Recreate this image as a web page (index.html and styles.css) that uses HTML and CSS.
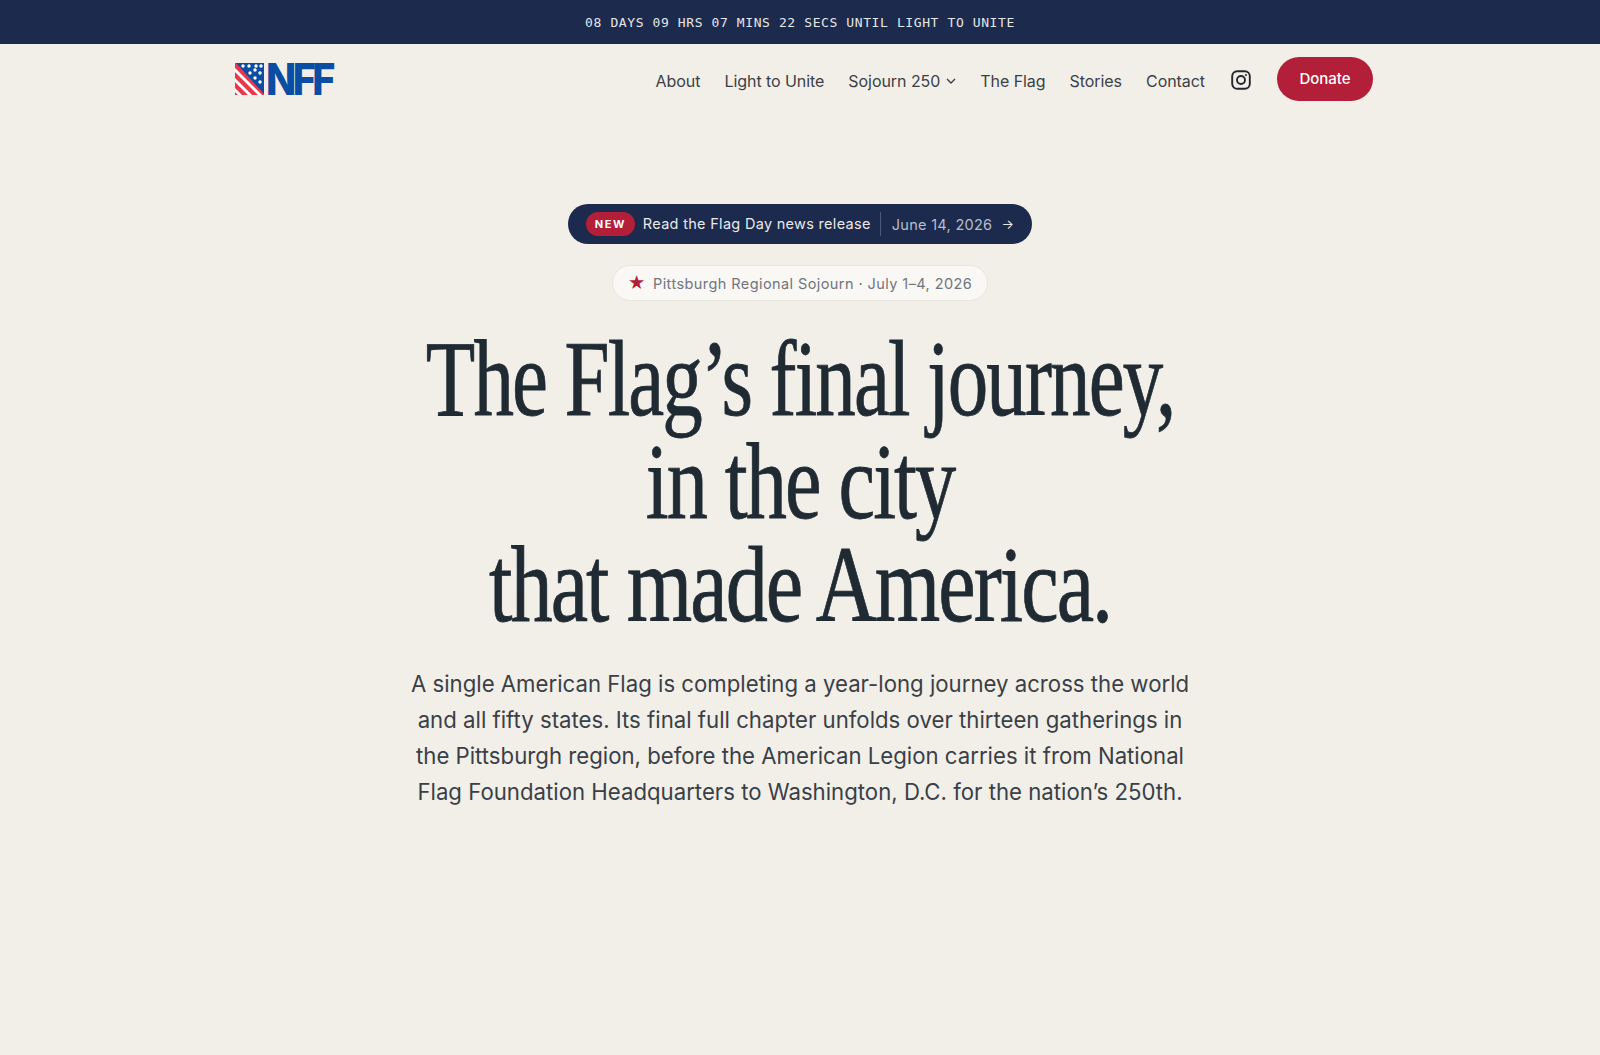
FILE: index.html
```html
<!DOCTYPE html>
<html lang="en">
<head>
    <meta charset="UTF-8">
    <meta name="viewport" content="width=device-width, initial-scale=1.0">
    <title>National Flag Foundation</title>
    <link rel="stylesheet" href="styles.css">
</head>
<body>
    <div class="countdown">08 DAYS 09 HRS 07 MINS 22 SECS UNTIL LIGHT TO UNITE</div>

    <header class="site-header">
        <a class="logo" href="#">
            <svg class="logo-flag" width="29" height="32" viewBox="0 0 29 32">
                <rect width="29" height="32" fill="#e8394a"/>
                <path d="M0 5 L27 32 H23 L0 9 Z M0 15 L17 32 H13 L0 19 Z M0 25 L7 32 H3 L0 29 Z" fill="#fff"/>
                <path d="M1 0 H29 V31 Z" fill="#0b4da2"/>
                <g fill="#fff">
                    <circle cx="8" cy="3" r="1.7"/>
                    <circle cx="14" cy="3" r="1.7"/>
                    <circle cx="21" cy="3" r="1.7"/>
                    <circle cx="26" cy="3" r="1.7"/>
                    <circle cx="15" cy="10" r="1.7"/>
                    <circle cx="20" cy="7" r="1.7"/>
                    <circle cx="25" cy="10" r="1.7"/>
                    <circle cx="20" cy="15" r="1.7"/>
                    <circle cx="25" cy="19" r="1.7"/>
                </g>
            </svg>
            <span class="logo-text">NFF</span>
        </a>
        <nav class="site-nav">
            <a href="#">About</a>
            <a href="#">Light to Unite</a>
            <a href="#" class="has-caret">Sojourn 250
                <svg width="10" height="6" viewBox="0 0 10 6" fill="none" stroke="#3a3f47" stroke-width="1.4"><path d="M1 1 L5 5 L9 1"/></svg>
            </a>
            <a href="#">The Flag</a>
            <a href="#">Stories</a>
            <a href="#">Contact</a>
            <a href="#" class="insta">
                <svg width="20" height="20" viewBox="0 0 20 20" fill="none" stroke="#23282e" stroke-width="1.9">
                    <rect x="1.2" y="1.2" width="17.6" height="17.6" rx="5"/>
                    <circle cx="10" cy="10" r="4"/>
                    <circle cx="15" cy="5" r="0.6" fill="#23282e" stroke-width="1"/>
                </svg>
            </a>
            <a href="#" class="btn-donate">Donate</a>
        </nav>
    </header>

    <main class="hero">
        <a href="#" class="news-pill">
            <span class="news-tag">NEW</span>
            <span class="news-text">Read the Flag Day news release</span>
            <span class="news-date">June 14, 2026</span>
            <span class="news-arrow">→</span>
        </a>
        <div class="event-pill">
            <span class="event-star">★</span>
            <span>Pittsburgh Regional Sojourn · July 1–4, 2026</span>
        </div>
        <h1 class="hero-title">
            <span class="line-one">The Flag’s final journey,</span>
            <span class="line-two">in the city</span>
            <span class="line-three">that made America.</span>
        </h1>
        <p class="hero-text">A single American Flag is completing a year-long journey across the world and all fifty states. Its final full chapter unfolds over thirteen gatherings in the Pittsburgh region, before the American Legion carries it from National Flag Foundation Headquarters to Washington, D.C. for the nation’s 250th.</p>
    </main>
</body>
</html>
```

FILE: styles.css
```css
* {
    box-sizing: border-box;
}
body {
    margin: 0;
    min-height: 1055px;
    background-color: #f2efe8;
    color: #1f2a33;
    font-family: Inter, "Liberation Sans", sans-serif;
}
a {
    color: inherit;
    text-decoration: none;
}
.countdown {
    height: 44px;
    line-height: 46px;
    text-align: center;
    background-color: #1c2a4d;
    color: #e6e6e6;
    font-family: "DejaVu Sans Mono", monospace;
    font-size: 13px;
    letter-spacing: 0.6px;
}
.site-header {
    width: 1138px;
    margin-left: 235px;
    padding-top: 13px;
    display: flex;
    justify-content: space-between;
    align-items: flex-start;
}
.logo {
    display: flex;
    align-items: center;
    gap: 2px;
    height: 44px;
}
.logo-text {
    font-size: 44px;
    font-weight: 800;
    letter-spacing: -4px;
    line-height: 44px;
    color: #0b4da2;
    transform: scaleX(0.9);
    transform-origin: left center;
}
.site-nav {
    display: flex;
    align-items: center;
    gap: 24px;
    padding-top: 4px;
    font-size: 16px;
    letter-spacing: -0.06px;
    color: #3a3f47;
}
.has-caret {
    display: flex;
    align-items: center;
    gap: 6px;
}
.insta {
    display: flex;
    margin-top: -3px;
    margin-left: 2px;
}
.btn-donate {
    width: 96px;
    height: 44px;
    line-height: 44px;
    text-align: center;
    margin-left: 2px;
    margin-top: -4px;
    border-radius: 22px;
    background-color: #b31e38;
    color: #fff;
    font-size: 15px;
    font-weight: 500;
}
.hero {
    display: flex;
    flex-direction: column;
    align-items: center;
    padding-top: 103px;
}
.news-pill {
    display: flex;
    align-items: center;
    height: 40px;
    padding: 0 18px;
    border-radius: 20px;
    background-color: #1c2a4d;
    color: #e9e9e9;
    font-size: 14.5px;
    letter-spacing: 0.3px;
}
.news-tag {
    height: 24px;
    line-height: 24px;
    padding: 0 9px;
    margin-right: 8px;
    border-radius: 12px;
    background-color: #b31e38;
    color: #fff;
    font-size: 11px;
    font-weight: 700;
    letter-spacing: 1.5px;
}
.news-text {
    padding-right: 9px;
    border-right: 1px solid #4d5a78;
    line-height: 24px;
}
.news-date {
    padding-left: 11px;
    color: #b9bfcb;
}
.news-arrow {
    margin-left: 9px;
    font-size: 13px;
}
.event-pill {
    display: flex;
    align-items: center;
    gap: 7px;
    height: 36px;
    margin-top: 21px;
    padding: 0 15px;
    border: 1px solid #e7e4dd;
    border-radius: 18px;
    background-color: #f9f8f5;
    color: #71757c;
    font-size: 14.5px;
    letter-spacing: 0.42px;
}
.event-star {
    color: #b31e38;
    font-size: 17px;
}
.hero-title {
    margin: 26px 0 0;
    font-family: "Liberation Serif", serif;
    font-size: 108px;
    font-weight: 400;
    line-height: 103px;
    text-align: center;
    color: #1f2a33;
    letter-spacing: -2.5px;
    -webkit-text-stroke: 0.8px #1f2a33;
}
.hero-title span {
    display: block;
    white-space: nowrap;
}
.line-one {
    transform: scaleX(0.75);
}
.line-two {
    transform: scaleX(0.763);
}
.line-three {
    transform: scaleX(0.78);
}
.hero-text {
    width: 790px;
    margin: 30px 0 0;
    font-size: 22.2px;
    line-height: 36px;
    text-align: center;
    color: #3a3f47;
}
```
